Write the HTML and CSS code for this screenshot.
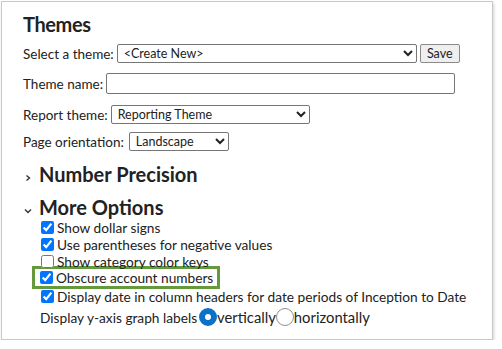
FILE: index.html
```html
<!DOCTYPE html>
<html lang="en">
<head>
  <meta charset="UTF-8">
  <title>Themes</title>
  <link rel="stylesheet" href="styles.css">
</head>
<body>
  <div class="panel">
    <h2 class="title">Themes</h2>

    <div class="field row-select">
      <label for="theme-select">Select a theme:</label>
      <select id="theme-select" class="sel-theme">
        <option>&lt;Create New&gt;</option>
      </select>
      <button class="save">Save</button>
    </div>

    <div class="field row-name">
      <label for="theme-name">Theme name:</label>
      <input id="theme-name" type="text" class="txt-name">
    </div>

    <div class="field row-report">
      <label for="report-theme">Report theme:</label>
      <select id="report-theme" class="sel-report">
        <option>Reporting Theme</option>
      </select>
    </div>

    <div class="field row-orient">
      <label for="orientation">Page orientation:</label>
      <select id="orientation" class="sel-orient">
        <option>Landscape</option>
        <option>Portrait</option>
      </select>
    </div>

    <div class="section">
      <svg class="chev" width="8" height="8" viewBox="0 0 8 8"><path d="M2.5 1.5 L5.5 4 L2.5 6.5" fill="none" stroke="#333" stroke-width="1.4"/></svg>
      <h3>Number Precision</h3>
    </div>

    <div class="section open">
      <svg class="chev" width="8" height="8" viewBox="0 0 8 8"><path d="M1 2.5 L4 5.5 L7 2.5" fill="none" stroke="#333" stroke-width="1.4"/></svg>
      <h3>More Options</h3>
    </div>

    <ul class="options">
      <li><label><input type="checkbox" checked> Show dollar signs</label></li>
      <li><label><input type="checkbox" checked> Use parentheses for negative values</label></li>
      <li><label><input type="checkbox"> Show category color keys</label></li>
      <li class="highlight"><label><input type="checkbox" checked> Obscure account numbers</label></li>
      <li><label><input type="checkbox" checked> Display date in column headers for date periods of Inception to Date</label></li>
      <li class="radios">
        <span>Display y-axis graph labels</span>
        <label><input type="radio" name="yaxis" checked>vertically</label>
        <label><input type="radio" name="yaxis">horizontally</label>
      </li>
    </ul>
  </div>
</body>
</html>
```

FILE: styles.css
```css
body {
  margin: 0;
  padding: 1px 0 0 1px;
  font-family: Lato, 'Noto Sans', sans-serif;
  color: #222;
  background: #fff;
}
.panel {
  width: 469px;
  height: 323px;
  border: 1px solid #c8c8c8;
  box-shadow: 1px 2px 3px rgba(0, 0, 0, 0.18);
  padding: 9px 0 5px 21px;
}
.title {
  margin: 0;
  font-size: 20px;
  letter-spacing: -0.4px;
  font-weight: bold;
  line-height: 26px;
}
.field {
  display: flex;
  align-items: center;
  font-size: 13.5px;
}
.field label {
  margin-right: 3px;
}
.field select, .field input, .field button {
  font-family: Lato, 'Noto Sans', sans-serif;
  font-size: 12.5px;
  color: #222;
  margin: 0;
}
.field select {
  height: 19px;
  padding: 0 2px;
  border: 1px solid #767676;
  border-radius: 2px;
  background: #fff;
}
.row-select {
  margin-top: 7px;
  height: 19px;
}
.sel-theme {
  width: 300px;
}
.save {
  margin-left: 3px !important;
  height: 19px;
  width: 40px;
  padding: 0;
  border: 1px solid #8a8a8a;
  border-radius: 2px;
  background: #efefef;
}
.row-name {
  margin-top: 10px;
  height: 21px;
}
.txt-name {
  width: 349px;
  height: 21px;
  box-sizing: border-box;
  border: 1px solid #767676;
  border-radius: 2px;
}
.row-report {
  margin-top: 11px;
  height: 19px;
}
.sel-report {
  width: 199px;
}
.row-orient {
  margin-top: 8px;
  height: 19px;
}
.row-orient label {
  margin-right: 5px;
}
.sel-orient {
  width: 100px;
}
.section {
  display: flex;
  align-items: flex-end;
  margin-top: 11px;
}
.section + .section {
  margin-top: 9px;
}
.section h3 {
  margin: 0;
  font-size: 20px;
  font-weight: bold;
  line-height: 24px;
}
.chev {
  margin: 0 7px 4px 1px;
}
.options {
  list-style: none;
  margin: 0;
  padding: 0 0 0 17px;
  font-size: 13.7px;
  line-height: 17px;
}
.options li {
  display: flex;
  align-items: center;
  height: 17px;
}
.options label {
  display: flex;
  align-items: center;
}
.options input[type=checkbox] {
  width: 13px;
  height: 13px;
  margin: 0 3px 0 1px;
}
.highlight {
  width: 178px;
  margin: -4px 0 -1px -8px;
  padding: 0 0 0 4px;
  border: 3px solid #659a3c;
}
.radios {
  margin-top: 3px;
  height: 18px !important;
}
.radios span {
  margin-right: 2px;
}
.radios label {
  font-size: 14.8px;
}
.radios input[type=radio] {
  appearance: none;
  width: 18px;
  height: 18px;
  margin: 0;
  border-radius: 50%;
  border: 1px solid #8f8f8f;
  background: #fff;
}
.radios input[type=radio]:checked {
  border: 6px solid #0b72c9;
}
```
